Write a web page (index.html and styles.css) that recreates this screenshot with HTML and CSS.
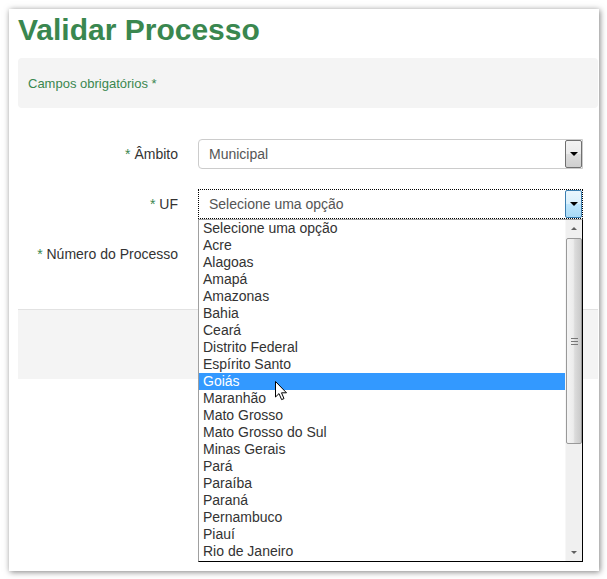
FILE: index.html
```html
<!DOCTYPE html>
<html lang="pt-BR">
<head>
<meta charset="utf-8">
<title>Validar Processo</title>
<link rel="stylesheet" href="styles.css">
</head>
<body>
<div class="window">
  <h1 class="title">Validar Processo</h1>
  <div class="required-panel">Campos obrigatórios *</div>
  <div class="form">
    <div class="row">
      <div class="label"><span class="ast">*</span> Âmbito</div>
      <div class="select">
        <span class="select-text">Municipal</span>
        <span class="arrow-btn"><span class="tri"></span></span>
      </div>
    </div>
    <div class="row">
      <div class="label"><span class="ast">*</span> UF</div>
      <div class="select focused">
        <span class="select-text">Selecione uma opção</span>
        <span class="arrow-btn hot"><span class="tri"></span></span>
      </div>
    </div>
    <div class="row">
      <div class="label"><span class="ast">*</span> Número do Processo</div>
      <div class="input"></div>
    </div>
  </div>
  <div class="footer-panel"></div>

  <div class="dropdown">
    <ul class="options">
      <li>Selecione uma opção</li>
      <li>Acre</li>
      <li>Alagoas</li>
      <li>Amapá</li>
      <li>Amazonas</li>
      <li>Bahia</li>
      <li>Ceará</li>
      <li>Distrito Federal</li>
      <li>Espírito Santo</li>
      <li class="hl">Goiás</li>
      <li>Maranhão</li>
      <li>Mato Grosso</li>
      <li>Mato Grosso do Sul</li>
      <li>Minas Gerais</li>
      <li>Pará</li>
      <li>Paraíba</li>
      <li>Paraná</li>
      <li>Pernambuco</li>
      <li>Piauí</li>
      <li>Rio de Janeiro</li>
    </ul>
    <div class="scrollbar">
      <div class="sb-btn"><span class="sb-up"></span></div>
      <div class="sb-track">
        <div class="sb-thumb"><span class="grip"></span></div>
      </div>
      <div class="sb-btn"><span class="sb-down"></span></div>
    </div>
  </div>

  <svg class="cursor" width="13" height="20" viewBox="0 0 13 20">
    <path d="M0.5 0.5 L0.5 16 L4 12.6 L6.6 18.6 L9 17.6 L6.5 11.8 L11.5 11.8 Z" fill="#fff" stroke="#000" stroke-width="1" stroke-linejoin="miter"/>
  </svg>
</div>
</body>
</html>
```

FILE: styles.css
```css
html, body {
  margin: 0;
  padding: 0;
  background: #ffffff;
}
body {
  font-family: "Liberation Sans", Arial, sans-serif;
  width: 607px;
  height: 579px;
  overflow: hidden;
}
.window {
  position: relative;
  margin: 9px 0 0 9px;
  width: 590px;
  height: 562px;
  box-sizing: border-box;
  padding: 4px 1px 0 9px;
  background: #fff;
  box-shadow: 1px 1px 6px rgba(0,0,0,0.5);
}
.title {
  margin: 0 0 11px 0;
  font-size: 30px;
  line-height: 34px;
  font-weight: bold;
  color: #3a874f;
}
.required-panel {
  height: 50px;
  box-sizing: border-box;
  background: #f4f4f4;
  border-radius: 4px;
  padding: 0 10px;
  display: flex;
  align-items: center;
  font-size: 13px;
  color: #3a874f;
}
.form {
  padding-top: 31px;
  display: flex;
  flex-direction: column;
  gap: 20px;
}
.row {
  display: flex;
  align-items: center;
  height: 30px;
}
.label {
  width: 180px;
  box-sizing: border-box;
  padding-right: 20px;
  text-align: right;
  font-size: 14px;
  color: #333;
}
.ast {
  color: #3a874f;
}
.select {
  position: relative;
  width: 385px;
  height: 30px;
  box-sizing: border-box;
  border: 1px solid #cccccc;
  border-radius: 4px 0 0 4px;
  display: flex;
  align-items: center;
  padding-left: 10px;
  font-size: 14px;
  color: #555;
}
.select.focused {
  border: 1px dotted #000;
  border-radius: 0;
}
.arrow-btn {
  position: absolute;
  right: 0;
  top: 0;
  bottom: 0;
  width: 17px;
  box-sizing: border-box;
  border: 1px solid #707070;
  border-radius: 2px;
  background: linear-gradient(to bottom, #f2f2f2 0%, #ebebeb 50%, #dddddd 51%, #cfcfcf 100%);
  display: flex;
  align-items: center;
  justify-content: center;
}
.arrow-btn.hot {
  border-color: #3c7fb1;
  background: linear-gradient(to bottom, #eaf6fd 0%, #d9f0fc 50%, #bee6fd 51%, #a7d9f5 100%);
}
.tri {
  width: 0;
  height: 0;
  border-left: 4px solid transparent;
  border-right: 4px solid transparent;
  border-top: 4px solid #000;
}
.input {
  width: 385px;
  height: 30px;
}
.footer-panel {
  margin-top: 40px;
  height: 69px;
  background: #f4f4f4;
  border-top: 1px solid #e2e2e2;
}
.dropdown {
  position: absolute;
  left: 189px;
  top: 210px;
  width: 385px;
  height: 343px;
  box-sizing: border-box;
  background: #fff;
  border-left: 1px solid #a0a0a0;
  border-right: 1px solid #000;
  border-bottom: 1px solid #000;
  border-top: 1px solid #a0a0a0;
  display: flex;
}
.options {
  list-style: none;
  margin: 0;
  padding: 0;
  width: 366px;
  overflow: hidden;
}
.options li {
  height: 17px;
  line-height: 17px;
  padding-left: 4px;
  font-size: 14px;
  color: #333;
  white-space: nowrap;
}
.options li.hl {
  background: #3399ff;
  color: #fff;
}
.scrollbar {
  width: 17px;
  display: flex;
  flex-direction: column;
  background: #f0f0f0;
  border-left: 1px solid #f7f7f7;
  box-sizing: border-box;
}
.sb-btn {
  height: 17px;
  display: flex;
  align-items: center;
  justify-content: center;
}
.sb-up {
  width: 0;
  height: 0;
  border-left: 3px solid transparent;
  border-right: 3px solid transparent;
  border-bottom: 3px solid #606060;
}
.sb-down {
  width: 0;
  height: 0;
  border-left: 3px solid transparent;
  border-right: 3px solid transparent;
  border-top: 3px solid #606060;
}
.sb-track {
  flex: 1;
  padding-top: 1px;
}
.sb-thumb {
  height: 206px;
  box-sizing: border-box;
  border: 1px solid #999;
  border-radius: 2px;
  background: linear-gradient(to right, #f4f4f4 0%, #ececec 45%, #dcdcdc 55%, #c9c9c9 100%);
  display: flex;
  align-items: center;
  justify-content: center;
}
.grip {
  width: 7px;
  height: 5px;
  border-top: 1px solid #777;
  border-bottom: 1px solid #777;
  position: relative;
}
.grip::after {
  content: "";
  position: absolute;
  left: 0;
  right: 0;
  top: 2px;
  border-top: 1px solid #777;
}
.cursor {
  position: absolute;
  left: 266px;
  top: 372px;
}
```
